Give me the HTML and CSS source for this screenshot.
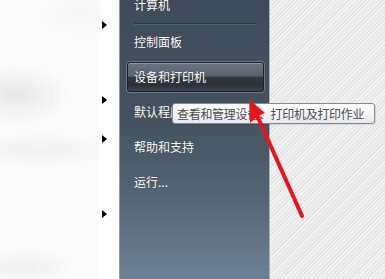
FILE: index.html
```html
<!DOCTYPE html>
<html lang="zh-CN">
<head>
<meta charset="utf-8">
<title>开始菜单</title>
<link rel="stylesheet" href="styles.css">
</head>
<body>
<div class="screen">
  <div class="left">
    <div class="arrows">
      <span class="tri t1"></span>
      <span class="tri t2"></span>
      <span class="tri t3"></span>
      <span class="tri t4"></span>
    </div>
  </div>
  <div class="panel">
    <div class="item first">计算机</div>
    <div class="sep"></div>
    <div class="list">
      <div class="item">控制面板</div>
      <div class="item active">设备和打印机</div>
      <div class="item">默认程序</div>
      <div class="item">帮助和支持</div>
      <div class="item">运行...</div>
    </div>
  </div>
  <div class="right"></div>
  <div class="tooltip">查看和管理设备、打印机及打印作业</div>
  <svg class="annot" width="385" height="279" viewBox="0 0 385 279">
    <line x1="302" y1="216" x2="256" y2="113" stroke="#e8141c" stroke-width="4" stroke-linecap="round"/>
    <polygon points="249,99 265,113 258,116 250,123" fill="#e8141c"/>
  </svg>
</div>
</body>
</html>
```
FILE: styles.css
```css
html, body {
  margin: 0;
  padding: 0;
  width: 385px;
  height: 279px;
  overflow: hidden;
  background: #ffffff;
}
.screen {
  position: relative;
  display: flex;
  width: 385px;
  height: 279px;
  font-family: "Noto Sans CJK SC", "Noto Sans", sans-serif;
}
.left {
  width: 119px;
  flex: none;
  background:
    radial-gradient(ellipse 55px 30px at 15px 95px, rgba(200,200,200,0.4), rgba(255,255,255,0) 100%),
    radial-gradient(ellipse 70px 18px at 40px 150px, rgba(215,215,215,0.3), rgba(255,255,255,0) 100%),
    radial-gradient(ellipse 40px 25px at 80px 12px, rgba(225,225,225,0.2), rgba(255,255,255,0) 100%),
    radial-gradient(ellipse 50px 20px at 25px 268px, rgba(215,215,215,0.35), rgba(255,255,255,0) 100%),
    linear-gradient(to right, #fbfbfb 0, #fbfbfb 98px, #ffffff 100px);
}
.arrows {
  display: flex;
  flex-direction: column;
  padding-left: 102px;
}
.tri {
  display: block;
  width: 0;
  height: 0;
  border-top: 4px solid transparent;
  border-bottom: 4px solid transparent;
  border-left: 5px solid #000;
}
.t1 { margin-top: 21px; }
.t2 { margin-top: 67px; }
.t3 { margin-top: 31px; }
.t4 { margin-top: 67px; }
.panel {
  width: 149px;
  flex: none;
  border-left: 1px solid #8e99a5;
  border-right: 1px solid #a9b1b9;
  box-shadow: 1px 0 0 #cfd2d5;
  background: linear-gradient(to bottom, #3f4b58 0%, #46535f 45%, #556474 70%, #6e8195 100%);
  display: flex;
  flex-direction: column;
}
.item {
  height: 30px;
  line-height: 30px;
  padding-left: 14px;
  font-size: 12px;
  color: #ffffff;
  text-shadow: 0 0 1px rgba(0,0,0,0.4);
  white-space: nowrap;
  overflow: hidden;
}
.item.first {
  margin-top: -10px;
}
.sep {
  margin: 3px 0 0 14px;
  width: 123px;
  height: 1px;
  background: #2d3741;
  box-shadow: 0 1px 0 rgba(120,135,150,0.35);
}
.list {
  display: flex;
  flex-direction: column;
  gap: 5px;
  margin-top: 3px;
}
.item.active {
  margin-left: 7px;
  margin-right: 5px;
  height: 28px;
  line-height: 28px;
  padding-left: 6px;
  border: 1px solid #1c2127;
  border-radius: 3px;
  box-shadow: 0 0 0 1px rgba(140,150,160,0.55), inset 0 1px 0 rgba(255,255,255,0.25);
  background: linear-gradient(to bottom, #6b747e 0%, #59626c 45%, #323940 52%, #2a3037 78%, #3c444c 100%);
}
.right {
  flex: 1;
  background-color: #ebebeb;
  background-image: repeating-linear-gradient(135deg, rgba(255,255,255,0.5) 0 1px, rgba(0,0,0,0.03) 1px 2px, rgba(255,255,255,0) 2px 3px);
}
.tooltip {
  position: absolute;
  left: 172px;
  top: 103px;
  width: 197px;
  height: 19px;
  padding-left: 4px;
  border: 1px solid #8a8a8a;
  border-radius: 3px;
  background: linear-gradient(to bottom, #ffffff 0%, #f3f3f7 60%, #e6e7ef 100%);
  box-shadow: 1px 1px 1px rgba(0,0,0,0.12);
  font-size: 12px;
  letter-spacing: -0.3px;
  line-height: 19px;
  color: #4c4c4c;
  white-space: nowrap;
}
.annot {
  position: absolute;
  left: 0;
  top: 0;
}
```
